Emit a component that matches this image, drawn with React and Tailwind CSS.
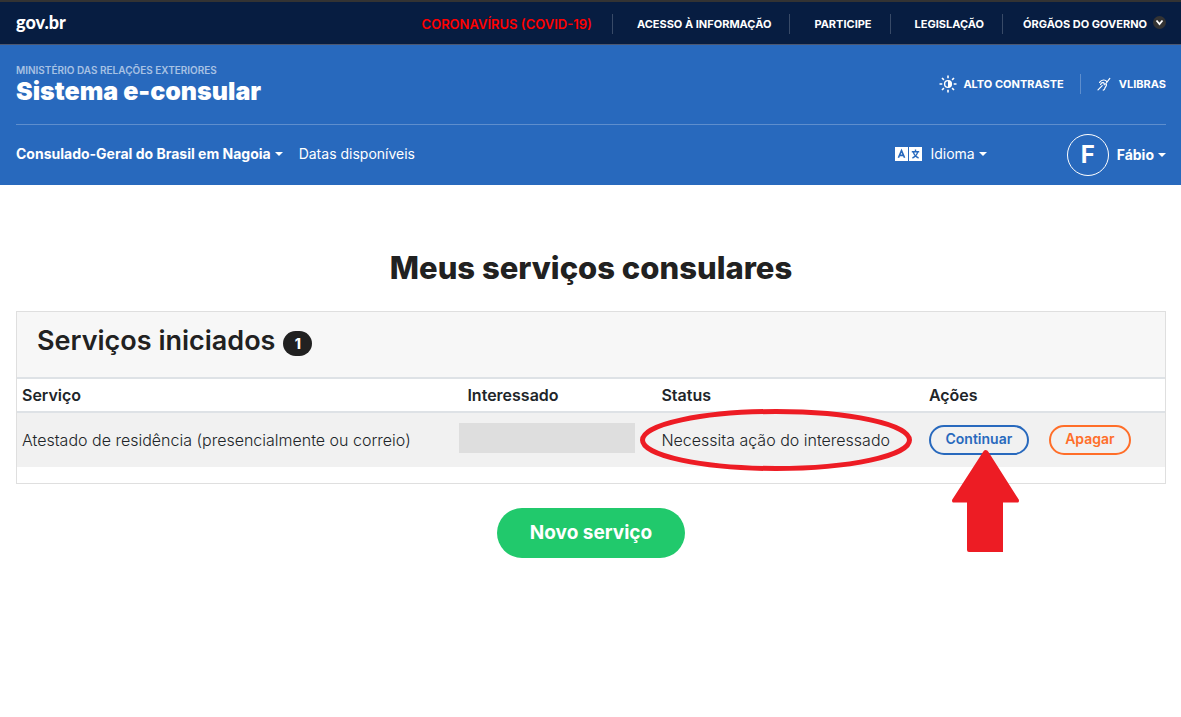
import React from 'react';

const topLinks = ['Acesso à informação', 'Participe', 'Legislação'];

const services = [
  {
    id: 1,
    name: 'Atestado de residência (presencialmente ou correio)',
    status: 'Necessita ação do interessado',
  },
];

function Caret() {
  return (
    <svg viewBox="0 0 8 4" className="w-2 h-1 shrink-0" fill="currentColor" aria-hidden="true">
      <path d="M0 0h8L4 4z" />
    </svg>
  );
}

function ContrastIcon() {
  return (
    <svg viewBox="0 0 18 18" className="w-[18px] h-[18px] shrink-0" fill="none" stroke="currentColor" aria-hidden="true">
      <circle cx="9" cy="9" r="3.4" strokeWidth="1.4" />
      <path d="M9 5.6a3.4 3.4 0 0 1 0 6.8z" fill="currentColor" stroke="none" />
      <path
        d="M9 .5v2.8M9 14.7v2.8M.5 9h2.8M14.7 9h2.8M3 3l1.9 1.9M13.1 13.1 15 15M3 15l1.9-1.9M13.1 4.9 15 3"
        strokeWidth="1.6"
      />
    </svg>
  );
}

function LibrasIcon() {
  return (
    <svg
      viewBox="0 0 14 14"
      className="w-3.5 h-3.5 shrink-0"
      fill="none"
      stroke="currentColor"
      strokeWidth="1.2"
      strokeLinecap="round"
      aria-hidden="true"
    >
      <path d="M12.8 1.4 8.6 7" />
      <path d="M2.6 5.4c1-1.6 2.400-2.400 4-2.400 1.600 0 2.600.6 3.200 1.600M9.400 7.400c.4 2-1.400 2.600-1.600 4-.2 1-.6 1.600-1.600 1.800" />
      <path d="M3.600 7.400c.6-1.400 1.600-2 2.600-1.800 1 .3 1.400 1.200 1 2.200M1 12.800l4.200-4.200" />
    </svg>
  );
}

function LanguageIcon() {
  return (
    <svg viewBox="0 0 27 14" className="w-[27px] h-3.5 shrink-0" aria-hidden="true">
      <path d="M0 0h13v14H0zM14 0h13v14H14z" fill="#fff" />
      <path d="M3.4 10.8 6.5 3.6l3.1 7.2M4.6 8.4h3.8" fill="none" stroke="#2869bd" strokeWidth="1.6" />
      <path
        d="M20.5 2.6v2M16.8 4.8h7.4M22.6 5.2c-.6 2.6-2.4 4.6-5.2 5.8M18.4 5.2c.6 2.6 2.4 4.6 5.2 5.8"
        fill="none"
        stroke="#2869bd"
        strokeWidth="1.4"
      />
    </svg>
  );
}

function TopBar() {
  return (
    <div className="flex items-center justify-between h-[45px] pl-4 pr-[15px] bg-[#071d41] border-t-2 border-t-[#333333] border-b border-b-[#4d5871]">
      <a href="#gov" className="font-['Lato',sans-serif] text-lg leading-5 font-black pb-0.5">
        gov.br
      </a>
      <nav className="flex items-center pt-0.5 text-[11px] leading-5 font-bold uppercase">
        <a href="#covid" className="pr-5 text-[13px] leading-5 font-semibold text-[#ff0000]">
          Coronavírus (COVID-19)
        </a>
        {topLinks.map((label) => (
          <a key={label} href="#link" className="border-l border-white/20 pl-6 pr-[18px]">
            {label}
          </a>
        ))}
        <button type="button" className="flex items-center gap-1.5 border-l border-white/20 pl-5 font-bold uppercase">
          Órgãos do Governo
          <svg viewBox="0 0 13 13" className="w-[13px] h-[13px] mb-1" aria-hidden="true">
            <circle cx="6.5" cy="6.5" r="6.5" fill="#333" />
            <path d="M3.5 4.5 6.5 8l3-3.5" fill="none" stroke="#fff" strokeWidth="1.8" />
          </svg>
        </button>
      </nav>
    </div>
  );
}

function Header() {
  return (
    <header className="bg-[#2869bd] pl-4 pr-[15px]">
      <div className="flex items-center justify-between h-20 border-b border-white/25">
        <div className="pb-1">
          <p className="text-[10px] leading-4 font-semibold uppercase text-white/60">
            Ministério das Relações Exteriores
          </p>
          <p className="text-[25px] leading-[26px] font-black">Sistema e-consular</p>
        </div>
        <div className="flex items-center pb-0.5 text-[11px] leading-5 font-bold uppercase">
          <button type="button" className="flex items-center gap-1.5 pr-4 font-bold uppercase">
            <ContrastIcon />
            Alto contraste
          </button>
          <button type="button" className="flex items-center gap-2 border-l border-white/25 pl-4 font-bold uppercase">
            <LibrasIcon />
            VLibras
          </button>
        </div>
      </div>

      <nav className="flex items-center justify-between h-[60px] text-sm">
        <div className="flex items-center gap-4 pb-0.5">
          <button type="button" className="flex items-center gap-1 font-bold">
            Consulado-Geral do Brasil em Nagoia
            <Caret />
          </button>
          <a href="#datas">Datas disponíveis</a>
        </div>
        <div className="flex items-center gap-20">
          <button type="button" className="flex items-center gap-1 pb-0.5">
            <LanguageIcon />
            <span className="ml-1">Idioma</span>
            <Caret />
          </button>
          <button type="button" className="flex items-center gap-2 font-bold">
            <span className="flex items-center justify-center w-[42px] h-[42px] rounded-full border border-white text-2xl font-bold">
              F
            </span>
            <span className="flex items-center gap-1">
              Fábio
              <Caret />
            </span>
          </button>
        </div>
      </nav>
    </header>
  );
}

function ServicesTable() {
  return (
    <table className="w-full table-fixed text-left">
      <colgroup>
        <col className="w-[38.8%]" />
        <col className="w-[16.9%]" />
        <col className="w-[23.3%]" />
        <col />
      </colgroup>
      <thead>
        <tr className="h-[34px] border-y-2 border-[#dee2e6]">
          <th className="px-[5px] font-semibold">Serviço</th>
          <th className="px-[5px] font-semibold">Interessado</th>
          <th className="px-[5px] font-semibold">Status</th>
          <th className="px-[5px] font-semibold">Ações</th>
        </tr>
      </thead>
      <tbody>
        {services.map((service) => (
          <tr key={service.id} className="h-[55px] bg-[#f1f1f1] font-light">
            <td className="px-[5px]">{service.name}</td>
            <td className="px-[5px] pb-1">
              <div className="-ml-2 h-[30px] w-[176px] bg-[#dedede]" />
            </td>
            <td className="px-[5px]">
              <span className="relative inline-block whitespace-nowrap">
                {service.status}
                <svg
                  viewBox="0 0 272 62"
                  className="absolute top-1/2 left-1/2 w-[272px] h-[62px] max-w-none -translate-x-1/2 -translate-y-1/2"
                  fill="none"
                  stroke="#ed1c24"
                  strokeWidth="5"
                  aria-hidden="true"
                >
                  <ellipse cx="136" cy="31" rx="133.5" ry="28.5" />
                </svg>
              </span>
            </td>
            <td className="px-[5px]">
              <div className="flex items-center gap-5 text-sm leading-5">
                <div className="relative">
                  <button
                    type="button"
                    className="flex items-center justify-center w-[100px] h-[30px] pb-0.5 rounded-full border-2 border-[#2869bd] font-semibold text-[#2869bd]"
                  >
                    Continuar
                  </button>
                  <svg
                    viewBox="0 0 68 102"
                    className="absolute top-[25px] left-[23px] w-[68px] h-[102px] max-w-none"
                    fill="#ed1c24"
                    aria-hidden="true"
                  >
                    <path d="M33.5 0q2 0 3 2L67 50q0 2.500-1 2.500H51V102H17q-2 0-2-2V52.500H1q-1 0-1-2.500L31 2q1-2 2.500-2z" />
                  </svg>
                </div>
                <button
                  type="button"
                  className="flex items-center justify-center w-[82px] h-[30px] pb-0.5 rounded-full border-2 border-[#ff6e29] font-semibold text-[#ff6e29]"
                >
                  Apagar
                </button>
              </div>
            </td>
          </tr>
        ))}
      </tbody>
    </table>
  );
}

export default function App() {
  return (
    <div className="min-h-screen bg-white font-['Inter',sans-serif] text-base text-[#212529]">
      <div className="text-white">
        <TopBar />
        <Header />
      </div>

      <main className="flex flex-col items-center pl-4 pr-[15px] pt-[65px]">
        <h1 className="text-[31px] leading-9 font-extrabold text-[#212121]">Meus serviços consulares</h1>

        <section className="w-full mt-[25px] pb-4 border border-[#dfdfdf]">
          <div className="flex items-center gap-2 h-[65px] px-5 pb-2 bg-[#f7f7f7] text-[#212121]">
            <h2 className="text-[27px] leading-9 font-semibold">Serviços iniciados</h2>
            <span className="mt-1.5 flex items-center justify-center w-[29px] h-[25px] rounded-full bg-[#212121] text-sm font-extrabold text-white">
              {services.length}
            </span>
          </div>
          <ServicesTable />
        </section>

        <button
          type="button"
          className="mt-6 flex items-center justify-center w-[188px] h-[50px] rounded-full bg-[#21c96c] text-[19px] font-bold text-white"
        >
          Novo serviço
        </button>
      </main>
    </div>
  );
}
